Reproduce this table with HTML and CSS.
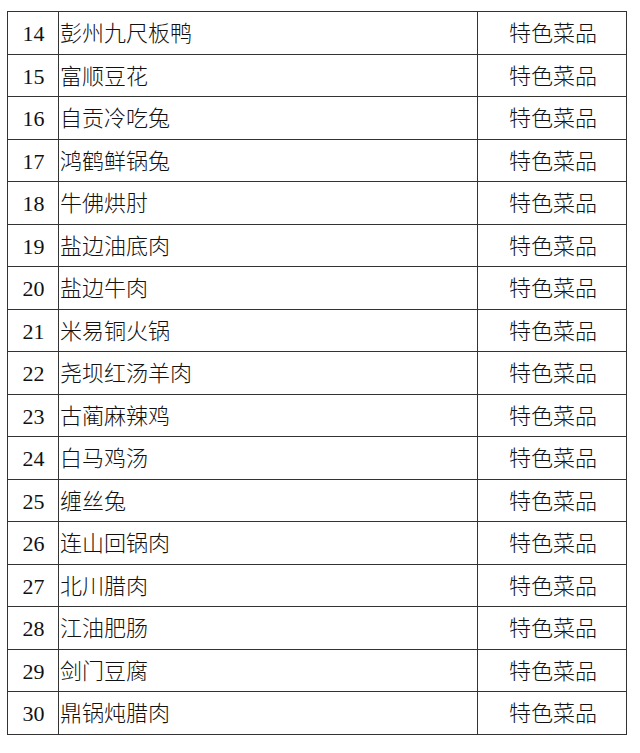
FILE: index.html
```html
<!DOCTYPE html>
<html lang="zh">
<head>
<meta charset="utf-8">
<link rel="stylesheet" href="styles.css">
</head>
<body>
<table class="menu">
<colgroup><col class="c-num"><col class="c-name"><col class="c-cat"></colgroup>
<tbody>
<tr><td class="num">14</td><td class="name">彭州九尺板鸭</td><td class="cat">特色菜品</td></tr>
<tr><td class="num">15</td><td class="name">富顺豆花</td><td class="cat">特色菜品</td></tr>
<tr><td class="num">16</td><td class="name">自贡冷吃兔</td><td class="cat">特色菜品</td></tr>
<tr><td class="num">17</td><td class="name">鸿鹤鲜锅兔</td><td class="cat">特色菜品</td></tr>
<tr><td class="num">18</td><td class="name">牛佛烘肘</td><td class="cat">特色菜品</td></tr>
<tr><td class="num">19</td><td class="name">盐边油底肉</td><td class="cat">特色菜品</td></tr>
<tr><td class="num">20</td><td class="name">盐边牛肉</td><td class="cat">特色菜品</td></tr>
<tr><td class="num">21</td><td class="name">米易铜火锅</td><td class="cat">特色菜品</td></tr>
<tr><td class="num">22</td><td class="name">尧坝红汤羊肉</td><td class="cat">特色菜品</td></tr>
<tr><td class="num">23</td><td class="name">古蔺麻辣鸡</td><td class="cat">特色菜品</td></tr>
<tr><td class="num">24</td><td class="name">白马鸡汤</td><td class="cat">特色菜品</td></tr>
<tr><td class="num">25</td><td class="name">缠丝兔</td><td class="cat">特色菜品</td></tr>
<tr><td class="num">26</td><td class="name">连山回锅肉</td><td class="cat">特色菜品</td></tr>
<tr><td class="num">27</td><td class="name">北川腊肉</td><td class="cat">特色菜品</td></tr>
<tr><td class="num">28</td><td class="name">江油肥肠</td><td class="cat">特色菜品</td></tr>
<tr><td class="num">29</td><td class="name">剑门豆腐</td><td class="cat">特色菜品</td></tr>
<tr><td class="num">30</td><td class="name">鼎锅炖腊肉</td><td class="cat">特色菜品</td></tr>
</tbody>
</table>
</body>
</html>
```
FILE: styles.css
```css
html, body {
  margin: 0;
  padding: 0;
  background: #ffffff;
}
body {
  padding: 11px 0 0 7px;
}
.menu {
  border-collapse: collapse;
  table-layout: fixed;
  width: 619px;
  color: #111;
}
.c-num { width: 51px; }
.c-name { width: 419px; }
.c-cat { width: 149px; }
.menu tr {
  height: 42.5px;
}
.menu td {
  border: 1px solid #333;
  padding: 8px 0 0 0;
  vertical-align: baseline;
  font-family: "Noto Sans CJK SC", sans-serif;
  font-size: 22px;
  font-weight: 300;
  line-height: 22px;
}
.menu td.num {
  font-family: "Liberation Serif", "Times New Roman", serif;
  font-weight: 400;
  font-size: 22px;
  text-align: center;
  padding-left: 1px;
}
.menu .name {
  padding-left: 1px;
  text-align: left;
}
.menu .cat {
  text-align: center;
  padding-left: 2px;
}
```
